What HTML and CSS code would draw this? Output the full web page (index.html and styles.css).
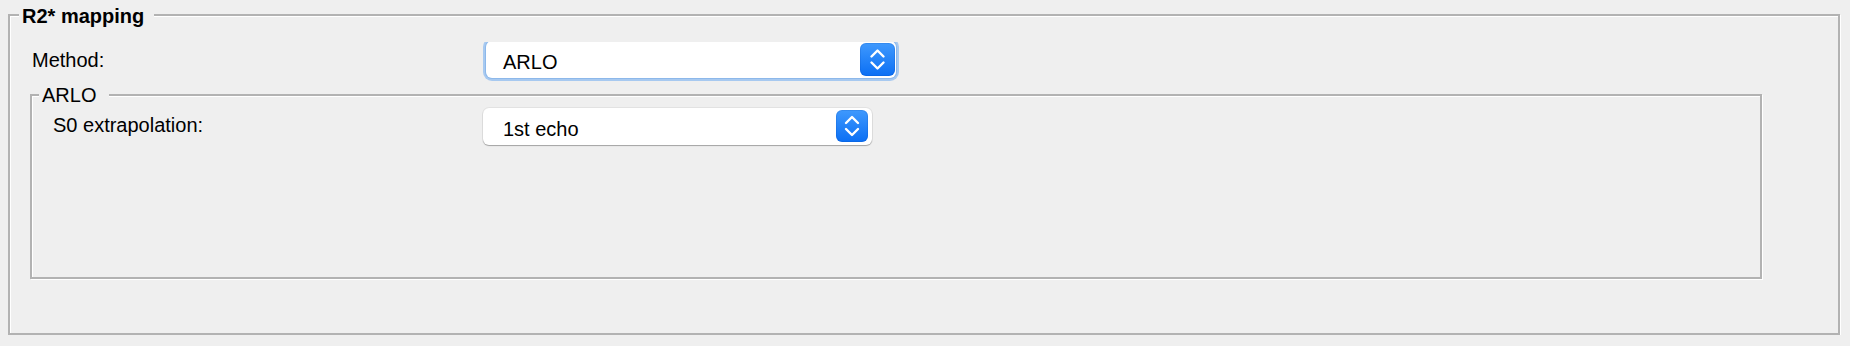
FILE: index.html
```html
<!DOCTYPE html>
<html>
<head>
<meta charset="utf-8">
<title>R2* mapping</title>
<link rel="stylesheet" href="styles.css">
</head>
<body>
<div class="panel">
  <span class="panel-title">R2* mapping</span>
  <div class="row row-method">
    <span class="label label-method">Method:</span>
    <div class="focus-clip">
      <div class="select select-focused">
        <span class="select-value">ARLO</span>
        <span class="select-btn btn-lg">
          <svg width="35" height="33" viewBox="0 0 35 33"><path d="M11.5 13.5 L17.5 7.5 L23.5 13.5 M11.5 19.5 L17.5 25.5 L23.5 19.5" fill="none" stroke="#fff" stroke-width="2.4" stroke-linecap="round" stroke-linejoin="round"/></svg>
        </span>
      </div>
    </div>
  </div>
  <div class="subpanel">
    <span class="subpanel-title">ARLO</span>
    <div class="row row-s0">
      <span class="label label-s0">S0 extrapolation:</span>
      <div class="select select-plain">
        <span class="select-value">1st echo</span>
        <span class="select-btn btn-sm">
          <svg width="32" height="32" viewBox="0 0 32 32"><path d="M10 13 L16 7 L22 13 M10 19 L16 25 L22 19" fill="none" stroke="#fff" stroke-width="2.4" stroke-linecap="round" stroke-linejoin="round"/></svg>
        </span>
      </div>
    </div>
  </div>
</div>
</body>
</html>
```
FILE: styles.css
```css
html, body {
  margin: 0;
  padding: 0;
  background: #efefef;
}
body {
  font-family: "Liberation Sans", Arial, Helvetica, sans-serif;
  font-size: 20px;
  line-height: 23px;
  color: #000;
}
.panel {
  position: relative;
  box-sizing: border-box;
  margin: 14px 0 0 8px;
  width: 1832px;
  height: 321px;
  border: 2px solid #b2b2b2;
  box-shadow: inset 1px 1px 0 #fff, 1px 1px 0 #fff;
  padding: 26px 0 0 20px;
}
.panel-title {
  position: absolute;
  left: 9px;
  top: -11px;
  padding: 0 10px 0 3px;
  background: #efefef;
  font-weight: bold;
}
.row {
  display: flex;
  align-items: flex-start;
}
.label {
  box-sizing: border-box;
  padding-top: 7px;
}
.label-method {
  width: 453px;
  padding-left: 2px;
}
.focus-clip {
  width: 416px;
  height: 39px;
  overflow: hidden;
}
.select {
  position: relative;
  box-sizing: border-box;
  background: #fff;
  display: flex;
  align-items: flex-start;
}
.select-focused {
  margin: -1px 3px 0;
  height: 37px;
  border-radius: 6px;
  box-shadow: 0 0 0 1px #8db8ea, 0 0 0 3px #a7c9f0;
  padding: 10px 0 0 17px;
}
.select-btn {
  position: absolute;
  display: block;
  border-radius: 6px;
  background: linear-gradient(#3f99fd, #0b6ff4);
  box-shadow: inset 0 0 0 1px rgba(0, 60, 160, 0.15);
}
.select-btn svg {
  display: block;
}
.btn-lg {
  right: 1px;
  top: 2px;
  width: 35px;
  height: 33px;
}
.subpanel {
  position: relative;
  box-sizing: border-box;
  margin-top: 13px;
  width: 1732px;
  height: 185px;
  border: 2px solid #b2b2b2;
  box-shadow: inset 1px 1px 0 #fff, 1px 1px 0 #fff;
  padding: 12px 0 0 0;
}
.subpanel-title {
  position: absolute;
  left: 7px;
  top: -12px;
  padding: 0 13px 0 3px;
  background: #efefef;
}
.label-s0 {
  width: 451px;
  padding-left: 21px;
  padding-top: 6px;
}
.select-plain {
  width: 389px;
  height: 37px;
  border-radius: 6px;
  box-shadow: 0 1px 1px rgba(0, 0, 0, 0.28), 0 0 0 1px rgba(0, 0, 0, 0.05);
  padding: 10px 0 0 20px;
}
.btn-sm {
  right: 4px;
  top: 2px;
  width: 32px;
  height: 32px;
}
```
